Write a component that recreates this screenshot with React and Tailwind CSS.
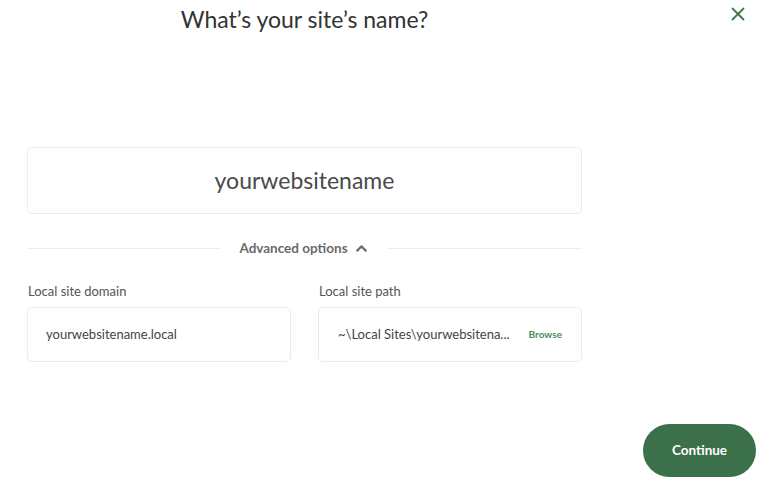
import { X, ChevronUp } from "lucide-react";

export default function App() {
  return (
    <div className="relative w-[768px] h-[487px] bg-white text-[#3a3a3a]" style={{ fontFamily: "Lato, 'Open Sans', sans-serif" }}>
      {/* Close */}
      <button className="absolute right-[19px] top-[3px] text-[#3e7a50]">
        <X className="w-[22px] h-[22px]" strokeWidth={2} />
      </button>

      <div className="w-[555px] ml-[27px] flex flex-col">
        <h1 className="text-center text-[23px] leading-[38px] text-[#333] mt-0">What’s your site’s name?</h1>

        <div className="mt-[109px] h-[67px] border border-[#ececec] rounded-[5px] flex items-center justify-center">
          <span className="text-[23px] text-[#4a4a4a]">yourwebsitename</span>
        </div>

        <div className="mt-[24px] flex items-center gap-[18px]">
          <div className="flex-1 h-px bg-[#ededed]" />
          <div className="flex items-center gap-[5px] text-[13.5px] font-bold text-[#6b6b6b]">
            Advanced options
            <ChevronUp className="w-[17px] h-[17px]" strokeWidth={3} />
          </div>
          <div className="flex-1 h-px bg-[#ededed]" />
        </div>

        <div className="mt-[24px] grid grid-cols-2 gap-[27px]">
          <div className="flex flex-col">
            <label className="text-[13px] text-[#555] leading-[18px] ml-px">Local site domain</label>
            <div className="mt-[7px] h-[55px] border border-[#ececec] rounded-[5px] flex items-center px-[18px]">
              <span className="text-[13px] text-[#444]">yourwebsitename.local</span>
            </div>
          </div>
          <div className="flex flex-col">
            <label className="text-[13px] text-[#555] leading-[18px] ml-px">Local site path</label>
            <div className="mt-[7px] h-[55px] border border-[#ececec] rounded-[5px] flex items-center pl-[19px] pr-[19px] justify-between">
              <span className="text-[13px] text-[#444]">~\Local Sites\yourwebsitena...</span>
              <span className="text-[10px] font-bold text-[#4c8a5e]">Browse</span>
            </div>
          </div>
        </div>
      </div>

      <button className="absolute left-[643px] top-[424px] w-[113px] h-[53px] rounded-full bg-[#3b704b] text-white text-[13.5px] font-bold">
        Continue
      </button>
    </div>
  );
}
